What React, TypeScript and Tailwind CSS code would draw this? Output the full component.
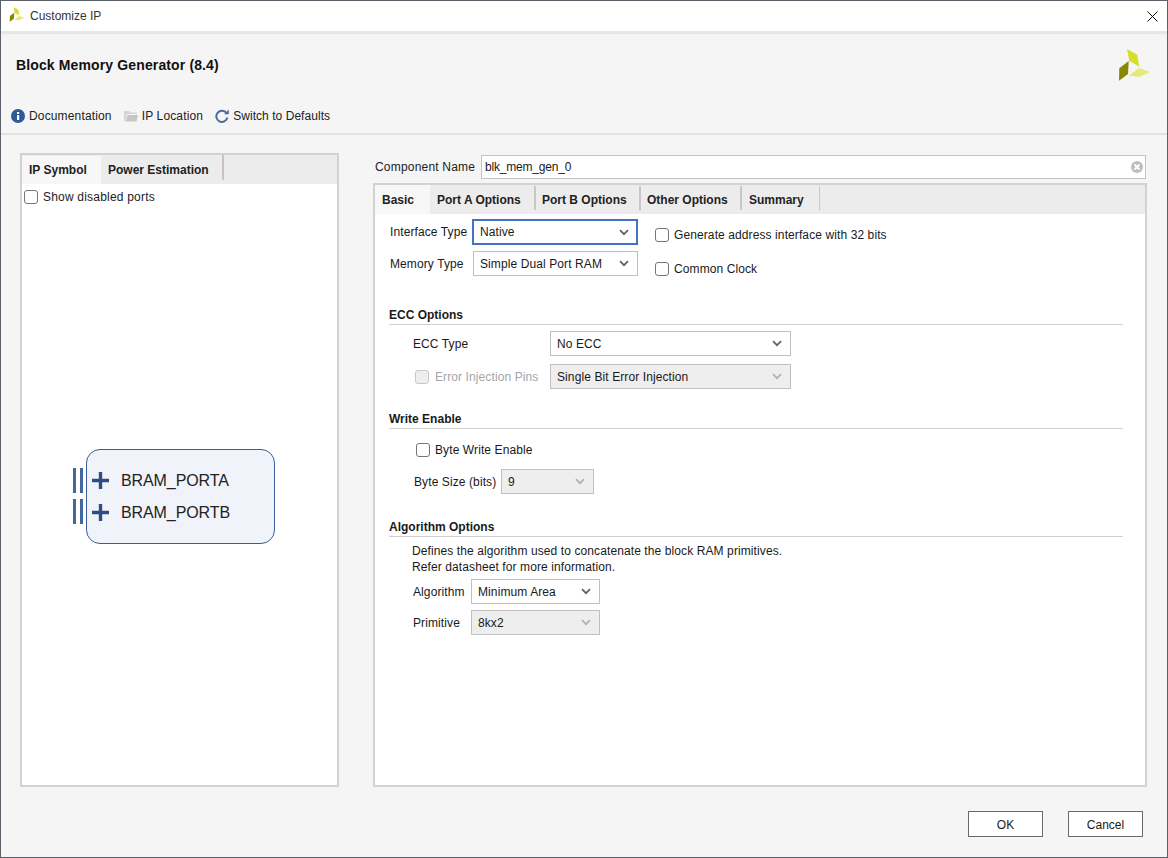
import React from "react";

function Logo({ className }: { className: string }) {
  return (
    <svg viewBox="0 0 31 32" className={className}>
      <polygon points="8,0 18.3,5.7 20.3,17.5 10.3,12" fill="#d6de2c" />
      <polygon points="20,19 31,23 20,28 10,26.5" fill="#e4ea78" />
      <polygon points="9.7,12 9,25 0,31.7 0.3,19.3" fill="#878a00" />
    </svg>
  );
}

function Chevron({ disabled }: { disabled?: boolean }) {
  return (
    <svg viewBox="0 0 10 7" className="w-[10px] h-[7px]">
      <path d="M1 1.2 L5 5.2 L9 1.2" fill="none" stroke={disabled ? "#b0b0b0" : "#606060"} strokeWidth="1.7" />
    </svg>
  );
}

function Select({ value, className, disabled, focus }: { value: string; className: string; disabled?: boolean; focus?: boolean }) {
  return (
    <div
      className={`flex items-center justify-between shrink-0 ${className} ${
        focus
          ? "border-2 border-[#4472c4] pl-[6px] pr-[7px] bg-white"
          : disabled
            ? "border border-[#c0c0c0] bg-[#eeeeee] pl-[6px] pr-[8px]"
            : "border border-[#c0c0c0] bg-white pl-[6px] pr-[8px]"
      }`}
    >
      <span>{value}</span>
      <Chevron disabled={disabled} />
    </div>
  );
}

function Check({ label, disabled, className }: { label: string; disabled?: boolean; className?: string }) {
  return (
    <div className={`flex items-center ${className ?? ""} ${disabled ? "text-[#a6a6a6] gap-[6px]" : "gap-[5px]"}`}>
      <span className={`w-[14px] h-[14px] rounded-[3px] border shrink-0 ${disabled ? "border-[#c8c8c8] bg-[#eeeeee]" : "border-[#767676] bg-white"}`} />
      <span>{label}</span>
    </div>
  );
}

function Section({ title, className }: { title: string; className: string }) {
  return (
    <div className={`h-[17px] border-b border-[#d0d0d0] font-bold leading-[15px] tracking-normal ${className}`}>{title}</div>
  );
}

function Port({ name, lower }: { name: string; lower?: boolean }) {
  return (
    <div className="flex items-center h-[25px]">
      <div className="flex gap-[4px] w-[10px] h-[25px] shrink-0 ml-[-19px]">
        <div className="w-[3px] h-full bg-[#41699b]" />
        <div className="w-[3px] h-full bg-[#41699b]" />
      </div>
      <div className={`flex items-center ${lower ? "pt-[2px]" : ""}`}>
        <svg viewBox="0 0 17 17" className="w-[17px] h-[17px] ml-[9px] shrink-0">
          <path d="M0 8.5 H17 M8.5 0 V17" stroke="#2e4d80" strokeWidth="3.4" />
        </svg>
        <span className="ml-[12px] text-[16px] leading-none text-[#222] tracking-[-0.1px]">{name}</span>
      </div>
    </div>
  );
}

export default function App() {
  const rightTabs = [
    { label: "Port A Options", cls: "w-[106px] pl-[7px] border-r-2" },
    { label: "Port B Options", cls: "w-[105px] pl-[6px] border-r-2" },
    { label: "Other Options", cls: "w-[101px] pl-[6px] border-r-2" },
    { label: "Summary", cls: "w-[78px] pl-[7px] border-r" },
  ];
  return (
    <div className="w-[1168px] h-[858px] bg-[#f5f5f5] border border-[#5c6068] flex flex-col text-[12px] text-[#1a1a1a] font-['Liberation_Sans',Arial,sans-serif] tracking-[0.1px] overflow-hidden">
      {/* Title bar */}
      <div className="h-[30px] bg-white flex items-center justify-between pl-[8px] pr-[9px] shrink-0">
        <div className="flex items-center gap-[5px]">
          <Logo className="w-[16px] h-[15px] mb-[3px]" />
          <span className="text-[#333] text-[12px] tracking-normal">Customize IP</span>
        </div>
        <svg viewBox="0 0 11 11" className="w-[11px] h-[11px]">
          <path d="M0.5 0.5 L10.5 10.5 M10.5 0.5 L0.5 10.5" stroke="#111" strokeWidth="1" />
        </svg>
      </div>
      <div className="h-[3px] bg-[#e6e6e6] shrink-0" />

      {/* Header */}
      <div className="h-[65px] pl-[15px] pr-[17px] flex justify-between items-start shrink-0">
        <div className="font-bold text-[14px] tracking-[0.13px] text-[#111] mt-[23px] leading-[17px]">Block Memory Generator (8.4)</div>
        <Logo className="w-[31px] h-[32px] mt-[15px]" />
      </div>

      {/* Toolbar */}
      <div className="h-[36px] pl-[10px] flex items-center shrink-0 border-b-2 border-[#e2e2e2] text-[#222] tracking-[0.1px]">
        <div className="flex items-center gap-[4px]">
          <svg viewBox="0 0 14 14" className="w-[14px] h-[14px]">
            <circle cx="7" cy="7" r="7" fill="#2f5a96" />
            <rect x="6" y="6" width="2.2" height="5" fill="#fff" />
            <rect x="6" y="3" width="2.2" height="2" fill="#fff" />
          </svg>
          <span className="tracking-[0.15px]">Documentation</span>
        </div>
        <div className="flex items-center gap-[4px] ml-[12px]">
          <svg viewBox="0 0 14 12" className="w-[14px] h-[12px]">
            <path d="M0 1 H5 L6.5 2.5 H13 V4 H3 L1 11 H0 Z" fill="#d4d4d4" />
            <path d="M3.5 5 H14 L12.5 11.5 H1.5 Z" fill="#c6c6c6" />
          </svg>
          <span className="tracking-[0.15px]">IP Location</span>
        </div>
        <div className="flex items-center gap-[4px] ml-[12px]">
          <svg viewBox="0 0 14 14" className="w-[14px] h-[14px]">
            <path d="M11.6 4.2 A5.6 5.6 0 1 0 12.4 8.5" fill="none" stroke="#4a6b9e" strokeWidth="2" />
            <path d="M9 5.2 H13.8 V0.6 Z" fill="#4a6b9e" />
          </svg>
          <span className="tracking-[0.05px]">Switch to Defaults</span>
        </div>
      </div>

      {/* Main */}
      <div className="flex-1 flex pl-[19px] pr-[20px] pt-[18px] gap-[34px] min-h-0">
        {/* Left panel */}
        <div className="w-[319px] h-[634px] border-2 border-[#d2d2d2] bg-white flex flex-col shrink-0">
          <div className="h-[29px] bg-[#ececec] flex items-stretch font-bold shrink-0 text-[#222] tracking-normal">
            <div className="w-[79px] bg-[#f7f7f7] pl-[7px] flex items-center mt-[1px]">IP Symbol</div>
            <div className="flex items-center pl-[7px] w-[123px] border-r-2 border-[#c4c4c4] mb-[4px] pt-[4px]">Power Estimation</div>
          </div>
          <Check label="Show disabled ports" className="ml-[2px] mt-[4px] text-[#222] tracking-[0.2px]" />
          <div className="ml-[64px] mt-[243px] w-[189px] h-[95px] rounded-[14px] border border-[#3b5c9a] bg-[#f0f4fa] pl-[5px] pt-[18px] flex flex-col gap-[6px]">
            <Port name="BRAM_PORTA" />
            <Port name="BRAM_PORTB" lower />
          </div>
        </div>

        {/* Right column */}
        <div className="flex-1 flex flex-col min-w-0">
          <div className="flex items-center h-[24px] mt-[2px] shrink-0 pr-[1px]">
            <span className="ml-[2px] w-[106px] text-[#222] tracking-[0.2px]">Component Name</span>
            <div className="flex-1 h-[24px] border border-[#c4c4c4] bg-white flex items-center justify-between pl-[3px] pr-[2px]">
              <span className="tracking-[-0.2px]">blk_mem_gen_0</span>
              <svg viewBox="0 0 12 12" className="w-[12px] h-[12px]">
                <circle cx="6" cy="6" r="6" fill="#bdbdbd" />
                <path d="M3.5 3.5 L8.5 8.5 M8.5 3.5 L3.5 8.5" stroke="#fff" strokeWidth="2" />
              </svg>
            </div>
          </div>

          <div className="mt-[4px] h-[604px] border-2 border-[#d2d2d2] bg-white flex flex-col">
            <div className="h-[29px] bg-[#ececec] flex items-stretch font-bold shrink-0 text-[#222] tracking-normal">
              <div className="w-[55px] bg-[#f7f7f7] pl-[7px] flex items-center pt-[1px]">Basic</div>
              {rightTabs.map((t) => (
                <div key={t.label} className={`flex items-center mt-[1px] mb-[4px] border-[#c8c8c8] pt-[3px] ${t.cls}`}>
                  {t.label}
                </div>
              ))}
            </div>

            <div className="pl-[14px] pr-[22px] flex flex-col">
              {/* Top rows */}
              <div className="flex mt-[5px]">
                <div className="flex flex-col gap-[6px]">
                  <div className="flex items-center">
                    <span className="ml-[1px] w-[82px]">Interface Type</span>
                    <Select value="Native" className="w-[166px] h-[26px]" focus />
                  </div>
                  <div className="flex items-center">
                    <span className="ml-[1px] w-[83px]">Memory Type</span>
                    <Select value="Simple Dual Port RAM" className="w-[165px] h-[25px]" />
                  </div>
                </div>
                <div className="ml-[17px] flex flex-col gap-[16px] pt-[7px]">
                  <Check label="Generate address interface with 32 bits" />
                  <Check label="Common Clock" />
                </div>
              </div>

              <Section title="ECC Options" className="mt-[30px]" />
              <div className="flex items-center mt-[6px]">
                <span className="ml-[24px] w-[137px]">ECC Type</span>
                <Select value="No ECC" className="w-[241px] h-[25px]" />
              </div>
              <div className="flex items-center mt-[8px]">
                <Check label="Error Injection Pins" disabled className="ml-[26px] w-[135px]" />
                <Select value="Single Bit Error Injection" className="w-[241px] h-[25px]" disabled />
              </div>

              <Section title="Write Enable" className="mt-[23px]" />
              <Check label="Byte Write Enable" className="ml-[27px] mt-[12px]" />
              <div className="flex items-center mt-[10px]">
                <span className="ml-[25px] w-[87px]">Byte Size (bits)</span>
                <Select value="9" className="w-[93px] h-[25px]" disabled />
              </div>

              <Section title="Algorithm Options" className="mt-[26px]" />
              <div className="ml-[23px] mt-[6px] leading-[16px]">
                <div>Defines the algorithm used to concatenate the block RAM primitives.</div>
                <div>Refer datasheet for more information.</div>
              </div>
              <div className="flex items-center mt-[4px]">
                <span className="ml-[24px] w-[58px]">Algorithm</span>
                <Select value="Minimum Area" className="w-[129px] h-[25px]" />
              </div>
              <div className="flex items-center mt-[6px]">
                <span className="ml-[24px] w-[58px]">Primitive</span>
                <Select value="8kx2" className="w-[129px] h-[25px]" disabled />
              </div>
            </div>
          </div>
        </div>
      </div>

      {/* Footer */}
      <div className="h-[69px] flex justify-end items-start gap-[25px] pr-[24px] pt-[23px] shrink-0">
        <button className="w-[75px] h-[26px] pt-[1px] border border-[#6a6a6a] bg-white tracking-normal">OK</button>
        <button className="w-[75px] h-[26px] pt-[1px] border border-[#6a6a6a] bg-white tracking-normal">Cancel</button>
      </div>
    </div>
  );
}
